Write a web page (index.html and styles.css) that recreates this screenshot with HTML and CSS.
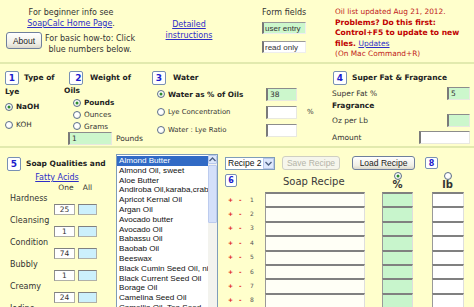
FILE: index.html
```html
<!DOCTYPE html>
<html lang="en">
<head>
  <meta charset="UTF-8" />
  <title>SoapCalc - Lye Calculator</title>
  <meta name="viewport" content="width=device-width, initial-scale=1" />
  <link rel="stylesheet" href="styles.css">
</head>
<body>
  <div class="calc">
    <div class="top">
      <div class="intro">
        <p>For beginner info see<br><a href="#">SoapCalc Home Page</a>.</p>
        <div class="about-row">
          <button class="btn btn-about">About</button>
          <p>For basic how-to: Click<br>blue numbers below.</p>
        </div>
      </div>
      <div class="detail"><a href="#">Detailed<br>instructions</a></div>
      <div class="legend">
        <span>Form fields</span>
        <input class="legend-field entry" value="user entry" />
        <input class="legend-field" value="read only" readonly />
      </div>
      <div class="news">
        <p>Oil list updated Aug 21, 2012.</p>
        <p class="warn">Problems? Do this first:<br>Control+F5 to update to new<br>files. <a href="#">Updates</a></p>
        <p>(On Mac Command+R)</p>
      </div>
    </div>

    <div class="setup">
      <div class="sec sec-lye">
        <div class="sec-title"><span class="num">1</span>Type of<br>Lye</div>
        <div class="opt bold"><span class="radio on"></span>NaOH</div>
        <div class="opt opt-koh"><span class="radio"></span>KOH</div>
      </div>
      <div class="sec sec-weight">
        <div class="sec-title"><span class="num">2</span>Weight of<br>Oils</div>
        <div class="opt bold"><span class="radio on"></span>Pounds</div>
        <div class="opt"><span class="radio"></span>Ounces</div>
        <div class="opt"><span class="radio"></span>Grams</div>
        <div class="weight-row">
          <input class="fld entry weight-fld" value="1" />
          <span>Pounds</span>
        </div>
      </div>
      <div class="sec sec-water">
        <div class="sec-title"><span class="num">3</span>Water</div>
        <div class="water-row">
          <span class="water-label bold"><span class="radio on"></span>Water as % of Oils</span>
          <input class="fld entry water-fld" value="38" />
        </div>
        <div class="water-row">
          <span class="water-label small"><span class="radio"></span>Lye Concentration</span>
          <input class="fld water-fld" value="" />
          <span class="pct">%</span>
        </div>
        <div class="water-row">
          <span class="water-label small"><span class="radio"></span>Water : Lye Ratio</span>
          <input class="fld water-fld" value="" />
        </div>
      </div>
      <div class="sec sec-fat">
        <div class="sec-title"><span class="num">4</span>Super Fat &amp; Fragrance</div>
        <div class="fat-row">
          <span>Super Fat %</span>
          <input class="fld entry fat-fld" value="5" />
        </div>
        <div class="fat-sub bold">Fragrance</div>
        <div class="fat-row">
          <span>Oz per Lb</span>
          <input class="fld entry fat-fld" value="" />
        </div>
        <div class="fat-row fat-amount">
          <span>Amount</span>
          <input class="fld amount-fld" value="" />
        </div>
      </div>
    </div>

    <div class="main">
      <div class="qualities">
        <div class="sec-title"><span class="num">5</span>Soap Qualities and</div>
        <a class="fatty" href="#">Fatty Acids</a>
        <div class="q-head"><span class="q-label"></span><span class="q-one">One</span><span class="q-all">All</span></div>
        <div class="q-row"><span class="q-label">Hardness</span><input class="q-fld" value="25" /><input class="q-fld all" value="" /></div>
        <div class="q-row"><span class="q-label">Cleansing</span><input class="q-fld" value="1" /><input class="q-fld all" value="" /></div>
        <div class="q-row"><span class="q-label">Condition</span><input class="q-fld" value="74" /><input class="q-fld all" value="" /></div>
        <div class="q-row"><span class="q-label">Bubbly</span><input class="q-fld" value="1" /><input class="q-fld all" value="" /></div>
        <div class="q-row"><span class="q-label">Creamy</span><input class="q-fld" value="24" /><input class="q-fld all" value="" /></div>
        <div class="q-row"><span class="q-label">Iodine</span><input class="q-fld" value="" /><input class="q-fld all" value="" /></div>
      </div>

      <div class="oil-list">
        <ul>
          <li class="sel">Almond Butter</li>
          <li>Almond Oil, sweet</li>
          <li>Aloe Butter</li>
          <li>Andiroba Oil,karaba,crab</li>
          <li>Apricot Kernal Oil</li>
          <li>Argan Oil</li>
          <li>Avocado butter</li>
          <li>Avocado Oil</li>
          <li>Babassu Oil</li>
          <li>Baobab Oil</li>
          <li>Beeswax</li>
          <li>Black Cumin Seed Oil, nigella</li>
          <li>Black Current Seed Oil</li>
          <li>Borage Oil</li>
          <li>Camelina Seed Oil</li>
          <li>Camellia Oil, Tea Seed</li>
        </ul>
        <div class="scroll">
          <div class="scroll-btn">
            <svg width="7" height="5" viewBox="0 0 7 5"><path d="M0.5 4 L3.5 1 L6.5 4" fill="none" stroke="#4d6185" stroke-width="1.4"/></svg>
          </div>
          <div class="scroll-thumb"></div>
        </div>
      </div>

      <div class="recipe">
        <div class="recipe-bar">
          <div class="select">Recipe 2<span class="select-arrow"><svg width="7" height="5" viewBox="0 0 7 5"><path d="M0.5 1 L3.5 4 L6.5 1" fill="none" stroke="#4d6185" stroke-width="1.4"/></svg></span></div>
          <button class="btn btn-save" disabled>Save Recipe</button>
          <button class="btn btn-load">Load Recipe</button>
          <span class="num">8</span>
        </div>
        <div class="recipe-grid">
          <div class="r-num"><span class="num">6</span></div>
          <div class="r-title">Soap Recipe</div>
          <div class="r-head"><span class="radio on"></span><b>%</b></div>
          <div class="r-head"><span class="radio"></span><b>lb</b></div>

          <div class="r-label"><i>+</i><i>-</i>1</div><input class="r-name" /><input class="r-pct" /><input class="r-lb" />
          <div class="r-label"><i>+</i><i>-</i>2</div><input class="r-name" /><input class="r-pct" /><input class="r-lb" />
          <div class="r-label"><i>+</i><i>-</i>3</div><input class="r-name" /><input class="r-pct" /><input class="r-lb" />
          <div class="r-label"><i>+</i><i>-</i>4</div><input class="r-name" /><input class="r-pct" /><input class="r-lb" />
          <div class="r-label"><i>+</i><i>-</i>5</div><input class="r-name" /><input class="r-pct" /><input class="r-lb" />
          <div class="r-label"><i>+</i><i>-</i>6</div><input class="r-name" /><input class="r-pct" /><input class="r-lb" />
          <div class="r-label"><i>+</i><i>-</i>7</div><input class="r-name" /><input class="r-pct" /><input class="r-lb" />
          <div class="r-label"><i>+</i><i>-</i>8</div><input class="r-name" /><input class="r-pct" /><input class="r-lb" />
        </div>
      </div>
    </div>
  </div>
</body>
</html>
```

FILE: styles.css
```css
*, *::before, *::after { box-sizing: border-box; }
html, body {
  margin: 0;
  height: 100%;
  overflow: hidden;
}
body {
  background: #ffffcc;
  font-family: "DejaVu Sans", Verdana, sans-serif;
  font-size: 8px;
  color: #333;
}
p { margin: 0; }
a { color: #2e2ec8; }
.bold { font-weight: bold; color: #222; }
input {
  font-family: "DejaVu Sans", Verdana, sans-serif;
  font-size: 7.5px;
  color: #333;
  padding: 0 2px;
  margin: 0;
  outline: none;
}

/* shared bits */
.num {
  display: inline-flex;
  justify-content: center;
  align-items: center;
  width: 14px;
  height: 14px;
  border: 1px solid #7890b4;
  border-radius: 2px;
  background: #fff;
  color: #1c1ccc;
  font-weight: bold;
  font-size: 9px;
  vertical-align: middle;
  margin-right: 5px;
}
.radio {
  display: inline-block;
  position: relative;
  width: 8px;
  height: 8px;
  border: 1px solid #5d6f8c;
  border-radius: 50%;
  background: radial-gradient(circle at 40% 40%, #fff 40%, #dcdccf);
  vertical-align: middle;
  margin-right: 3px;
}
.radio.on::after {
  content: "";
  position: absolute;
  left: 2px;
  top: 2px;
  width: 2px;
  height: 2px;
  border-radius: 50%;
  background: #2c8c2c;
  box-shadow: 0 0 0 0.5px #2c8c2c;
}
.btn {
  font-family: "Liberation Sans", Arial, sans-serif;
  font-size: 8.5px;
  color: #222;
  padding: 0;
  border: 1px solid #6f7f9c;
  border-radius: 3px;
  background: linear-gradient(#ffffff, #f0efe6 70%, #dcd9cc);
}
.btn:disabled {
  color: #b4b4a8;
  border-color: #cfcfc2;
  background: #f6f6ec;
}
.fld {
  height: 13px;
  border-top: 1px solid #8c8c8c;
  border-left: 2px solid #7a7a7a;
  border-right: 1px solid #e8e8e0;
  border-bottom: 1px solid #e8e8e0;
  background: #fff;
}
.fld.entry { background: #ccf7cc; }

/* top strip */
.top {
  display: flex;
  height: 64px;
  border-bottom: 2px solid #e2eaae;
}
.intro {
  flex: none;
  width: 142px;
  padding-top: 7px;
  line-height: 11px;
  text-align: center;
}
.about-row {
  display: flex;
  margin-top: 3px;
  padding-left: 6px;
}
.btn-about {
  width: 36px;
  height: 17px;
}
.about-row p {
  width: 94px;
  margin-top: 1px;
  margin-left: 1px;
}
.detail {
  flex: none;
  width: 94px;
  padding-top: 20px;
  line-height: 10.5px;
  text-align: center;
}
.legend {
  flex: none;
  display: flex;
  flex-direction: column;
  align-items: flex-start;
  margin-left: 26px;
  width: 73px;
  padding-top: 8px;
  line-height: 10px;
}
.legend-field {
  width: 44px;
  height: 12px;
  margin-top: 4px;
  border-top: 1px solid #9a9a9a;
  border-left: 2px solid #777;
  border-right: 1px solid #eee;
  border-bottom: 1px solid #eee;
  background: #fff;
  font-family: "Liberation Sans", Arial, sans-serif;
  font-size: 8px;
  padding: 0 1px;
}
.legend-field.entry { background: #ccf7cc; }
.legend-field + .legend-field { margin-top: 7px; }
.news {
  flex: 1;
  padding-top: 7px;
  line-height: 10.5px;
  font-size: 7.4px;
  color: #c01818;
  white-space: nowrap;
}
.news .warn {
  font-weight: bold;
  font-size: 7.6px;
  color: #c00000;
}
.news .warn a { font-weight: normal; font-size: 7.5px; }

/* step 1 - 4 */
.setup {
  display: flex;
  height: 84px;
  border-bottom: 2px solid #e2eaae;
}
.sec { padding-top: 7px; flex: none; }
.sec-title {
  font-weight: bold;
  font-size: 7.5px;
  line-height: 14px;
  color: #222;
}
.opt {
  display: flex;
  align-items: center;
  height: 12px;
  font-size: 7.3px;
}
.sec-lye {
  width: 64px;
  padding-left: 5px;
}
.sec-lye .opt { margin-top: 1px; height: 13px; }
.sec-lye .opt-koh { margin-top: 5px; }
.sec-weight {
  width: 84px;
}
.sec-weight .sec-title { line-height: 12px; text-indent: 5px; }
.sec-weight .sec-title .num { margin-right: 7px; }
.sec-weight .opt { padding-left: 9px; height: 11.7px; }
.weight-row {
  display: flex;
  align-items: center;
  padding-left: 4px;
  font-size: 7.5px;
}
.weight-fld {
  width: 44px;
  margin-right: 4px;
}
.sec-water {
  width: 180px;
  padding-left: 4px;
}
.sec-water .sec-title .num { margin-right: 7px; }
.water-row {
  display: flex;
  align-items: center;
  height: 18px;
}
.water-label {
  display: flex;
  align-items: center;
  width: 114px;
  padding-left: 5px;
  font-size: 7.3px;
}
.water-label.small { font-size: 6.9px; }
.water-fld { width: 31px; }
.pct {
  margin-left: 10px;
  font-size: 7px;
}
.sec-fat {
  flex: 1;
  padding-left: 4px;
  padding-right: 4px;
}
.sec-fat .sec-title { padding-left: 1px; }
.fat-row {
  display: flex;
  align-items: center;
  justify-content: space-between;
  height: 14px;
  margin-top: 1px;
  font-size: 7.5px;
}
.fat-fld { width: 23px; }
.fat-sub {
  height: 12px;
  line-height: 12px;
  font-size: 7.5px;
}
.fat-amount { margin-top: 3px; }
.amount-fld { width: 51px; }

/* step 5 - 8 */
.main {
  display: flex;
  height: 159px;
  overflow: hidden;
}
.qualities {
  flex: none;
  width: 116px;
  padding: 9px 0 0 7px;
}
.fatty {
  display: block;
  width: 100px;
  text-align: center;
  line-height: 11px;
  margin-top: 1px;
}
.q-head {
  display: flex;
  line-height: 10px;
  font-size: 7.5px;
}
.q-label {
  width: 47px;
  padding-left: 3px;
}
.q-one { width: 24px; text-align: center; }
.q-all { width: 19px; text-align: center; }
.q-row {
  display: flex;
  align-items: flex-end;
  height: 22px;
}
.q-row .q-label {
  align-self: flex-start;
  line-height: 11px;
}
.q-fld {
  width: 21px;
  height: 11px;
  margin-right: 3px;
  border: 1px solid #b0b0a8;
  border-top-color: #808080;
  border-left-color: #909090;
  background: #fff;
  text-align: center;
  font-size: 7.5px;
  padding: 0;
}
.q-fld.all {
  width: 19px;
  background: #ccf0fc;
}

.oil-list {
  flex: none;
  display: flex;
  width: 102px;
  height: 170px;
  margin-top: 6px;
  border: 1px solid #7f9db9;
  background: #fff;
}
.oil-list ul {
  flex: 1;
  margin: 0;
  padding: 1px 0 0;
  list-style: none;
  overflow: hidden;
  font-family: "Liberation Sans", Arial, sans-serif;
  font-size: 8.1px;
  line-height: 9.8px;
  color: #111;
}
.oil-list li {
  padding-left: 2px;
  white-space: nowrap;
  overflow: hidden;
}
.oil-list li.sel {
  background: #316ac5;
  color: #fff;
}
.scroll {
  width: 9px;
  background: #f3f3ee;
}
.scroll-btn {
  display: flex;
  justify-content: center;
  align-items: center;
  height: 9px;
  border: 1px solid #b8c8ec;
  border-radius: 1px;
  background: #dde8fc;
}
.scroll-thumb {
  height: 58px;
  margin-top: 1px;
  border: 1px solid #bccbee;
  border-radius: 1px;
  background: #d4e0fa;
}

.recipe {
  flex: 1;
  padding-left: 7px;
}
.recipe-bar {
  display: flex;
  align-items: center;
  margin-top: 8px;
  height: 14px;
}
.select {
  display: flex;
  align-items: center;
  justify-content: space-between;
  width: 50px;
  height: 13px;
  border: 1px solid #7f9db9;
  background: #fff;
  font-family: "Liberation Sans", Arial, sans-serif;
  font-size: 8.5px;
  padding-left: 2px;
  color: #111;
}
.select-arrow {
  display: flex;
  justify-content: center;
  align-items: center;
  width: 11px;
  height: 11px;
  border: 1px solid #b8c8ec;
  background: #dde8fc;
}
.btn-save {
  width: 58px;
  height: 14px;
  margin-left: 7px;
}
.btn-load {
  width: 63px;
  height: 14px;
  margin-left: 12px;
}
.recipe-bar .num {
  width: 13px;
  height: 12px;
  margin-left: 10px;
  font-size: 8px;
}
.recipe-grid {
  display: grid;
  grid-template-columns: 40px 117px 50px 32px;
  grid-template-rows: 22px;
  grid-auto-rows: 14.4px;
}
.r-num { padding-top: 4px; }
.r-num .num {
  width: 12px;
  height: 13px;
  font-size: 8px;
}
.r-title {
  padding: 6px 0 0 18px;
  font-size: 10px;
  color: #3a3a3a;
}
.r-head {
  display: flex;
  flex-direction: column;
  align-items: center;
  width: 31px;
  padding-top: 2px;
  line-height: 10px;
  font-size: 10px;
  color: #333;
}
.r-head .radio { margin: 0; }
.r-head:last-child { width: 32px; }
.r-label {
  display: flex;
  align-items: center;
  padding-left: 3px;
  font-size: 6px;
  color: #555;
}
.r-label i {
  font-style: normal;
  font-weight: bold;
  color: #e01010;
  width: 11px;
}
.r-name, .r-pct, .r-lb {
  height: 14.4px;
  border-top: 2px solid #808080;
  border-left: 1px solid #9a9a9a;
  border-right: 1px solid #dedede;
  border-bottom: 0;
  background: #fffff6;
}
.r-name { width: 100px; }
.r-pct { width: 31px; background: #c8f5cc; }
.r-lb { width: 32px; background: #fff; }
```
